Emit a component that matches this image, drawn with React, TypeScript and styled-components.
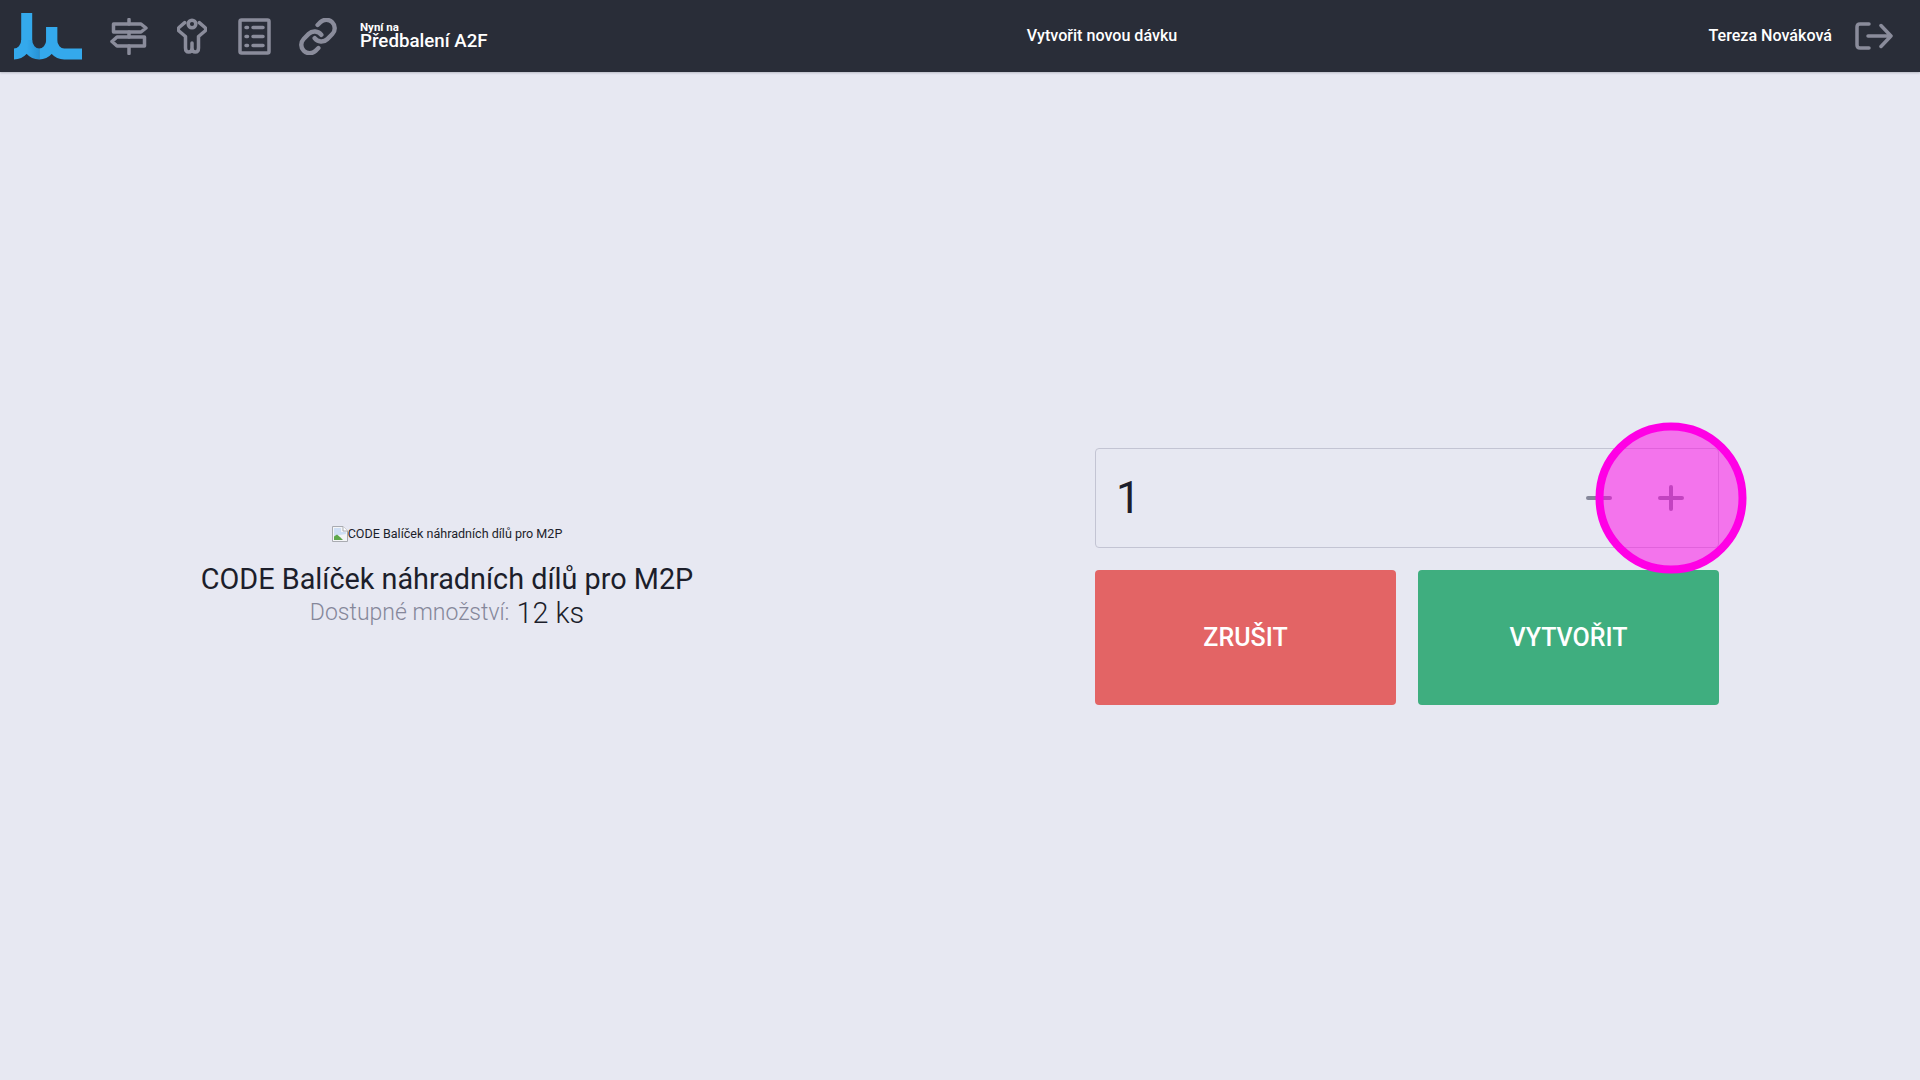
import styled, { createGlobalStyle } from 'styled-components'

const GlobalStyle = createGlobalStyle`
  html, body {
    margin: 0;
    height: 100%;
    background: #e7e8f2;
    font-family: Roboto, "Liberation Sans", sans-serif;
    color: #1c1e2b;
  }
  * {
    box-sizing: border-box;
  }
`

const TopBar = styled.header`
  display: flex;
  align-items: center;
  justify-content: space-between;
  height: 72px;
  padding: 0 27px 0 14px;
  background: #292d38;
  box-shadow: 0 1px 2px rgba(41, 45, 56, 0.25);
  color: #fff;
`

const LeftGroup = styled.div`
  display: flex;
  align-items: center;
`

const RightGroup = styled.div`
  display: flex;
  align-items: center;
  gap: 23px;
`

const Logo = styled.svg`
  display: block;
  width: 68px;
  height: 47px;
  margin-right: 28px;
`

const NavIcon = styled.svg<{ $gap: number }>`
  display: block;
  flex: none;
  margin-right: ${p => p.$gap}px;
  fill: none;
  stroke: #8a8c9b;
  stroke-width: 3.5;
  stroke-linecap: round;
  stroke-linejoin: round;
`

const LinkIcon = styled(NavIcon)`
  stroke-width: 2.6;
`

const Station = styled.div`
  display: flex;
  flex-direction: column;
  margin-top: -2px;
`

const StationLabel = styled.span`
  font-size: 11.5px;
  font-weight: 700;
  line-height: 12px;
`

const StationName = styled.span`
  font-size: 18.72px;
  font-weight: 500;
  line-height: 17px;
`

const BarTitle = styled.span`
  margin-top: -2px;
  font-size: 16.1px;
  font-weight: 500;
`

const CenterTitle = styled(BarTitle)`
  margin-left: 8px;
`

const Content = styled.main`
  display: flex;
  align-items: center;
  height: 1008px;
`

const Product = styled.section`
  display: flex;
  flex-direction: column;
  align-items: center;
  flex: none;
  width: 894px;
  padding-top: 1px;
`

const Picture = styled.div`
  display: flex;
  align-items: center;
  margin-bottom: 18px;
  font-size: 12.55px;
  line-height: 18px;
`

const BrokenImage = styled.svg`
  display: block;
  width: 16px;
  height: 16px;
`

const ProductName = styled.h1`
  margin: 0;
  font-size: 28.8px;
  font-weight: 400;
  line-height: 36px;
`

const Stock = styled.div`
  display: flex;
  align-items: center;
  gap: 7px;
  line-height: 32px;
`

const StockLabel = styled.span`
  font-size: 23px;
  font-weight: 300;
  color: #85879a;
`

const StockValue = styled.span`
  font-size: 28.8px;
  font-weight: 300;
`

const Form = styled.section`
  display: flex;
  flex-direction: column;
  gap: 22px;
  flex: none;
  width: 624px;
  margin-left: 201px;
`

const Quantity = styled.div`
  display: flex;
  align-items: center;
  height: 100px;
  padding: 0 11px 0 20px;
  border: 1px solid #c3c4d3;
  border-radius: 4px;
`

const QuantityValue = styled.span`
  flex: 1;
  font-size: 44px;
  font-weight: 400;
`

const Step = styled.div`
  position: relative;
  display: flex;
  align-items: center;
  justify-content: center;
  width: 72px;
  height: 98px;
`

const StepGlyph = styled.svg`
  display: block;
  width: 26px;
  height: 26px;
  stroke: #85879a;
  stroke-width: 4;
  stroke-linecap: round;
`

const ClickMarker = styled.div`
  position: absolute;
  top: 50%;
  left: 50%;
  width: 151px;
  height: 151px;
  border: 8px solid #ff00e5;
  border-radius: 50%;
  background: rgba(255, 0, 229, 0.5);
  transform: translate(-50%, -50%);
`

const Actions = styled.div`
  display: grid;
  grid-template-columns: 1fr 1fr;
  gap: 22px;
`

const ActionButton = styled.button<{ $tone: 'danger' | 'success' }>`
  height: 135px;
  border: 0;
  border-radius: 4px;
  background: ${p => (p.$tone === 'danger' ? '#e36465' : '#3fae7f')};
  color: #fff;
  font-family: inherit;
  font-size: 25px;
  font-weight: 500;
`

function TopNavigation () {
  return <LeftGroup>
    <Logo viewBox="0 0 68 47">
      <defs>
        <linearGradient id="fold" x1="0" x2="1" y1="0" y2="0">
          <stop offset="0" stopColor="#34a9ec" />
          <stop offset="1" stopColor="#2793d6" />
        </linearGradient>
      </defs>
      <g fill="none" stroke="#34a9ec" strokeWidth="11">
        <path d="M12.7 0V27A12.7 14 0 0 1 0 41" />
        <path d="M12.7 27A12.5 14 0 0 0 25.2 41" stroke="url(#fold)" />
        <path d="M37.7 14V27A12.5 14 0 0 1 25.2 41" />
        <path d="M37.7 14V27A12.5 14 0 0 0 50.2 41H68" />
      </g>
    </Logo>
    <NavIcon $gap={29} width="38" height="37" viewBox="0 0 38 37">
      <path d="M19 1.5V6M19 14V19M19 28V35.5" />
      <path d="M3.5 6H31L36 10L31 14H3.5Z" />
      <path d="M7 19H34.5V28H7L2 23.5Z" />
    </NavIcon>
    <NavIcon $gap={31} width="30" height="36" viewBox="0 0 30 36">
      <circle cx="15" cy="6" r="3.8" />
      <path d="M7.7 4.7L2 9.5C1 10.7 1 12 2 13L8.5 18.5V30C8.5 32.5 9.7 34 11.7 34C13.7 34 15 32.5 15 30V25V30C15 32.5 16.3 34 18.3 34C20.3 34 21.5 32.5 21.5 30V18.5L28 13C29 12 29 10.7 28 9.5L22.3 4.7" />
    </NavIcon>
    <NavIcon $gap={28} width="33" height="37" viewBox="0 0 33 37">
      <rect x="2" y="2" width="29" height="33" rx="1.5" />
      <path d="M8 9.5H9.5M15 9.5H25M8 18.5H9.5M15 18.5H25M8 27.5H9.5M15 27.5H25" />
    </NavIcon>
    <LinkIcon $gap={23} width="38" height="37" viewBox="1 1 22 22">
      <path d="M10 13a5 5 0 0 0 7.54.54l3-3a5 5 0 0 0-7.07-7.07l-1.72 1.71" />
      <path d="M14 11a5 5 0 0 0-7.54-.54l-3 3a5 5 0 0 0 7.07 7.07l1.71-1.71" />
    </LinkIcon>
    <Station>
      <StationLabel>Nyní na</StationLabel>
      <StationName>Předbalení A2F</StationName>
    </Station>
  </LeftGroup>
}

function UserArea () {
  return <RightGroup>
    <BarTitle>Tereza Nováková</BarTitle>
    <NavIcon $gap={0} width="38" height="28" viewBox="0 0 38 28">
      <path d="M14 2H5C3 2 2 3 2 5V23C2 25 3 26 5 26H14" />
      <path d="M13 14H36M26 3.5L36 14L26 24.5" />
    </NavIcon>
  </RightGroup>
}

function App () {
  return <>
    <GlobalStyle />
    <TopBar>
      <TopNavigation />
      <CenterTitle>Vytvořit novou dávku</CenterTitle>
      <UserArea />
    </TopBar>
    <Content>
      <Product>
        <Picture>
          <BrokenImage viewBox="0 0 16 16">
            <path d="M.5.5H11L15.5 5V15.5H.5Z" fill="#f4f5f7" stroke="#a9abb1" />
            <path d="M11 .5V5H15.5" fill="#fff" stroke="#a9abb1" />
            <path d="M2 2H9V6H14V8L2 10Z" fill="#cfdff5" />
            <path d="M2 14V10.5L5 8.5L8.5 11.5L11 14Z" fill="#5da84c" />
          </BrokenImage>
          CODE Balíček náhradních dílů pro M2P
        </Picture>
        <ProductName>CODE Balíček náhradních dílů pro M2P</ProductName>
        <Stock>
          <StockLabel>Dostupné množství:</StockLabel>
          <StockValue>12 ks</StockValue>
        </Stock>
      </Product>
      <Form>
        <Quantity>
          <QuantityValue>1</QuantityValue>
          <Step>
            <StepGlyph viewBox="0 0 26 26"><path d="M2 13H24" /></StepGlyph>
          </Step>
          <Step>
            <StepGlyph viewBox="0 0 26 26"><path d="M2 13H24M13 2V24" /></StepGlyph>
            <ClickMarker />
          </Step>
        </Quantity>
        <Actions>
          <ActionButton $tone="danger">ZRUŠIT</ActionButton>
          <ActionButton $tone="success">VYTVOŘIT</ActionButton>
        </Actions>
      </Form>
    </Content>
  </>
}

export default App
